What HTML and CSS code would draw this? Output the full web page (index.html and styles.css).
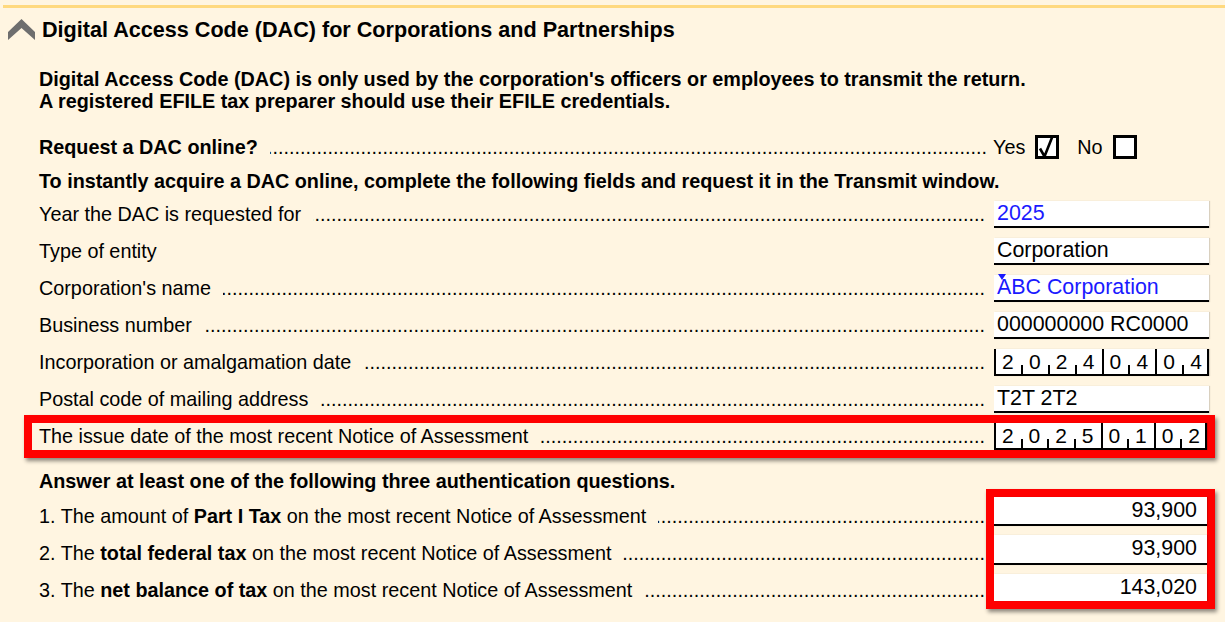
FILE: index.html
```html
<!DOCTYPE html>
<html lang="en">
<head>
<meta charset="utf-8">
<title>DAC</title>
<link rel="stylesheet" href="styles.css">
</head>
<body>
<div class="panel">
  <div class="header">
    <svg class="chev" width="27" height="21" viewBox="0 0 27 21"><path d="M0 13 L13.5 0 L27 13 L27 21 L13.5 9 L0 21 Z" fill="#6e6e6e"/></svg>
    <h1 class="title">Digital Access Code (DAC) for Corporations and Partnerships</h1>
  </div>
  <div class="content">
    <p class="intro">Digital Access Code (DAC) is only used by the corporation's officers or employees to transmit the return.<br>A registered EFILE tax preparer should use their EFILE credentials.</p>

    <div class="row">
      <span class="label bold">Request a DAC online?</span>
      <span class="dots req"></span>
      <span class="yn">
        <span class="yn-label">Yes</span>
        <span class="cb"><svg width="18" height="24" viewBox="0 0 18 24"><path d="M2 13.5 L6.5 21.5 L15 0" fill="none" stroke="#000" stroke-width="2.6" stroke-linejoin="miter"/></svg></span>
        <span class="yn-label no">No</span>
        <span class="cb"></span>
      </span>
    </div>
    <div class="note">To instantly acquire a DAC online, complete the following fields and request it in the Transmit window.</div>

    <div class="row">
      <span class="label">Year the DAC is requested for</span>
      <span class="dots"></span>
      <span class="field blue">2025</span>
    </div>
    <div class="row">
      <span class="label">Type of entity</span>
      <span class="spacer"></span>
      <span class="field">Corporation</span>
    </div>
    <div class="row">
      <span class="label">Corporation's name</span>
      <span class="dots"></span>
      <span class="field blue"><span class="caret-text">ABC Corporation</span></span>
    </div>
    <div class="row">
      <span class="label">Business number</span>
      <span class="dots"></span>
      <span class="field">000000000 RC0000</span>
    </div>
    <div class="row">
      <span class="label">Incorporation or amalgamation date</span>
      <span class="dots"></span>
      <span class="field date">
        <span class="cell major">2</span><span class="cell">0</span><span class="cell">2</span><span class="cell">4</span><span class="cell major">0</span><span class="cell">4</span><span class="cell major">0</span><span class="cell last">4</span>
      </span>
    </div>
    <div class="row">
      <span class="label">Postal code of mailing address</span>
      <span class="dots"></span>
      <span class="field">T2T 2T2</span>
    </div>
    <div class="row flagged">
      <span class="label">The issue date of the most recent Notice of Assessment</span>
      <span class="dots"></span>
      <span class="field date">
        <span class="cell major">2</span><span class="cell">0</span><span class="cell">2</span><span class="cell">5</span><span class="cell major">0</span><span class="cell">1</span><span class="cell major">0</span><span class="cell last">2</span>
      </span>
    </div>

    <div class="note answer">Answer at least one of the following three authentication questions.</div>

    <div class="qgrid">
      <div class="qrow">
        <span class="label">1. The amount of <b>Part I Tax</b> on the most recent Notice of Assessment</span>
        <span class="dots"></span>
      </div>
      <div class="qrow">
        <span class="label">2. The <b>total federal tax</b> on the most recent Notice of Assessment</span>
        <span class="dots"></span>
      </div>
      <div class="qrow">
        <span class="label">3. The <b>net balance of tax</b> on the most recent Notice of Assessment</span>
        <span class="dots"></span>
      </div>
      <div class="qfields">
        <span class="field num">93,900</span>
        <span class="field num">93,900</span>
        <span class="field num last">143,020</span>
      </div>
    </div>
  </div>
</div>
</body>
</html>
```
FILE: styles.css
```css
html, body {
  margin: 0;
  padding: 0;
  background: #fff5e1;
}
body {
  font-family: "Liberation Sans", Arial, sans-serif;
  color: #000;
  width: 1225px;
  height: 622px;
  overflow: hidden;
}
.panel {
  margin: 5px 0 0 3px;
  border-top: 3px solid #ffd97e;
}
.header {
  height: 44px;
  display: flex;
  align-items: center;
  padding-left: 5px;
  gap: 7px;
}
.chev { display: block; margin-top: -1px; }
.title {
  margin: 0;
  font-size: 21.6px;
  font-weight: bold;
  line-height: 24px;
}
.content {
  padding: 0 16px 0 36px;
}
.intro {
  margin: 16px 0 16.5px;
  font-weight: bold;
  font-size: 19.8px;
  line-height: 22px;
  white-space: nowrap;
}
.row {
  height: 37px;
  display: flex;
  align-items: center;
  font-size: 19.8px;
}
.label {
  white-space: nowrap;
  flex-shrink: 0;
}
.bold { font-weight: bold; }
.dots {
  flex: 1;
  min-width: 0;
  overflow: hidden;
  white-space: nowrap;
  direction: rtl;
  margin: 0 9px 0 12px;
  font-size: 19.8px;
}
.dots.req { margin-right: 6px; }
.dots::after {
  content: "............................................................................................................................................................................................................................................................................................";
}
.spacer { flex: 1; }
.yn {
  width: 216px;
  flex-shrink: 0;
  display: flex;
  align-items: center;
}
.yn-label { font-size: 19.8px; }
.yn-label.no { margin-left: 18px; }
.cb {
  width: 18px;
  height: 18px;
  border: 3px solid #000;
  background: #fff;
  margin-left: 10px;
  position: relative;
  display: block;
}
.cb svg {
  position: absolute;
  left: 0;
  top: -3px;
}
.note {
  height: 30.5px;
  line-height: 30.5px;
  font-weight: bold;
  font-size: 19.8px;
  white-space: nowrap;
}
.note.answer {
  height: 22px;
  line-height: 22px;
  padding-top: 15px;
}
.field {
  width: 215px;
  height: 25px;
  box-sizing: content-box;
  background: #fff;
  border-bottom: 2px solid #000;
  font-size: 21.4px;
  line-height: 25px;
  padding: 0;
  text-indent: 3px;
  white-space: nowrap;
  flex-shrink: 0;
  display: block;
  box-shadow: 1px 0 1px rgba(0,0,0,0.15);
}
.field.blue { color: #1a1aff; }
.caret-text {
  position: relative;
}
.caret-text::before {
  content: "";
  position: absolute;
  left: 1px;
  top: -1px;
  border-left: 4px solid transparent;
  border-right: 4px solid transparent;
  border-top: 6px solid #1a1aff;
}
.field.date {
  display: flex;
  text-indent: 0;
}
.cell {
  flex: 1;
  text-align: center;
  position: relative;
  font-size: 21px;
  padding-left: 1px;
}
.cell::before {
  content: "";
  position: absolute;
  left: 0;
  bottom: 0;
  width: 2px;
  height: 9px;
  background: #000;
}
.cell.major::before { height: 100%; }
.cell.last::after {
  content: "";
  position: absolute;
  right: 0;
  bottom: 0;
  width: 2px;
  height: 100%;
  background: #000;
}
.flagged {
  border: 8px solid #ff0000;
  margin: -3px -6px -3px -15px;
  padding-left: 7px;
  height: 27px;
  box-shadow: 2px 3px 4px rgba(0,0,0,0.45);
}
.flagged .field { width: 213px; }
.qgrid {
  display: grid;
  grid-template-columns: minmax(0, 1fr) 215px;
  grid-template-rows: repeat(3, 37px);
}
.qrow {
  grid-column: 1;
  min-width: 0;
  display: flex;
  align-items: center;
  padding-top: 12px;
  height: 25px;
  font-size: 19.8px;
}
.qrow .dots { margin-right: 9px; }
.qfields {
  grid-column: 2;
  grid-row: 1 / 4;
  display: flex;
  flex-direction: column;
  gap: 9px;
  border: 8px solid #ff0000;
  margin: -3px -6px -6px -8px;
  box-shadow: 2px 3px 4px rgba(0,0,0,0.45);
}
.qfields .field {
  width: auto;
  flex: 1;
  height: auto;
  text-align: right;
  padding-right: 10px;
  font-size: 21.4px;
  line-height: 27px;
}
.qfields .field.last { border-bottom: 0; }
```
